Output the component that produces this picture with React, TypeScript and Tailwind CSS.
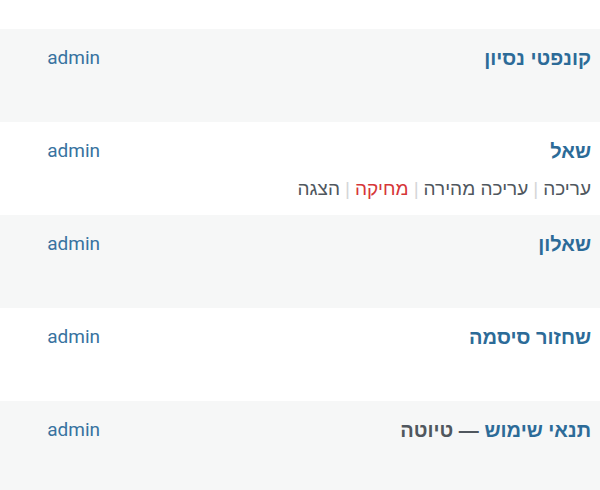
const rows = [
  { title: "קונפטי נסיון", striped: true },
  { title: "שאל", striped: false, actions: true },
  { title: "שאלון", striped: true },
  { title: "שחזור סיסמה", striped: false },
  { title: "תנאי שימוש", state: "טיוטה", striped: true },
];

const actions = [
  { label: "עריכה" },
  { label: "עריכה מהירה" },
  { label: "מחיקה", danger: true },
  { label: "הצגה" },
];

export default function App() {
  return (
    <div
      dir="rtl"
      className="w-[600px] h-[490px] overflow-hidden bg-white"
      style={{ fontFamily: 'Roboto, "Liberation Sans", sans-serif' }}
    >
      <div className="h-[29px]" />
      {rows.map((row) => (
        <div
          key={row.title}
          className={`grid grid-cols-[1fr_110px] h-[93px] ${row.striped ? "bg-[#f6f7f7]" : "bg-white"}`}
        >
          <div className="pr-[9px] pt-[17px]">
            <div className="text-[20px] leading-[24px] font-bold" style={{ fontFamily: '"Liberation Sans", sans-serif' }}>
              <a className="text-[#2c6b98]">{row.title}</a>
              {row.state && <span className="text-[#50575e]"> — {row.state}</span>}
            </div>
            {row.actions && (
              <div
                className="mt-[14px] flex items-center text-[19px] leading-[24px] text-[#50575e]"
                style={{ fontFamily: '"Liberation Sans", sans-serif' }}
              >
                {actions.map((a, i) => (
                  <span key={a.label} className="flex items-center">
                    <a className={a.danger ? "text-[#d63638]" : "text-[#50575e]"}>{a.label}</a>
                    {i < actions.length - 1 && <span className="text-[#d5d6d8] px-[5px]">|</span>}
                  </span>
                ))}
              </div>
            )}
          </div>
          <div className="pr-[10px] pt-[18px] text-[19px] leading-[22px] text-[#3873a0]">admin</div>
        </div>
      ))}
    </div>
  );
}
